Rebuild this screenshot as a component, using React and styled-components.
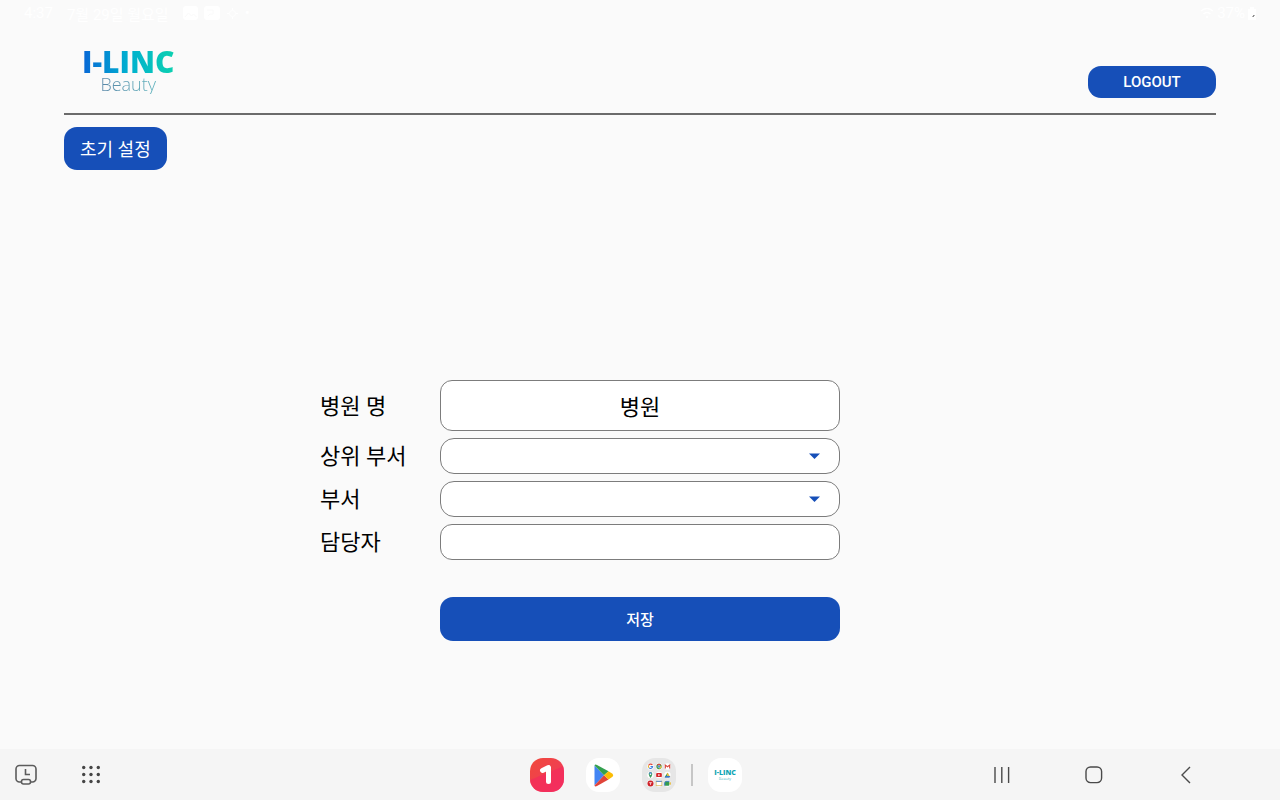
import React, { useState } from "react";
import styled, { createGlobalStyle } from "styled-components";

const primary = "#164fb8";
const border = "#7c7c7c";
const fonts = 'Roboto, "Noto Sans CJK KR", sans-serif';

const GlobalStyle = createGlobalStyle`
  * {
    box-sizing: border-box;
  }
  body {
    margin: 0;
    background-color: #fafafa;
    color: #000;
    font-family: ${fonts};
  }
`;

const Screen = styled.div`
  min-height: 100vh;
  display: flex;
  flex-direction: column;
`;

const StatusBar = styled.div`
  display: flex;
  justify-content: space-between;
  align-items: center;
  height: 26px;
  padding: 0 24px;
  color: #fff;
  font-size: 15px;
`;

const StatusGroup = styled.div`
  display: flex;
  align-items: center;
  gap: ${(props) => props.$gap || 6}px;
`;

const Header = styled.header`
  display: flex;
  justify-content: space-between;
  align-items: flex-end;
  height: 89px;
  margin: 0 5%;
  padding: 0 0 15px 18px;
  border-bottom: 2px solid #6b6b6b;
`;

const Logo = styled.a`
  display: flex;
  flex-direction: column;
  align-items: center;
  padding-bottom: 4px;
  text-decoration: none;
`;

const LogoName = styled.span`
  font-family: "Open Sans", sans-serif;
  font-size: 30px;
  font-weight: 800;
  line-height: 24px;
  color: transparent;
  background-image: linear-gradient(90deg, #0866d6, #00b0d0 50%, #0cd0b0);
  background-clip: text;
`;

const LogoSub = styled.span`
  font-family: "Open Sans", sans-serif;
  font-size: 18px;
  font-weight: 300;
  line-height: 20px;
  color: transparent;
  background-image: linear-gradient(90deg, #5a87a8, #5fb3bd);
  background-clip: text;
`;

const Button = styled.button`
  border: 0;
  border-radius: 13px;
  cursor: pointer;
  color: #fff;
  background-color: ${primary};
  font-family: ${fonts};
  font-size: 15px;
  font-weight: 500;
`;

const LogoutButton = styled(Button)`
  width: 128px;
  height: 32px;
`;

const SetupButton = styled(Button)`
  align-self: flex-start;
  height: 43px;
  margin: 12px 5% 0;
  padding: 0 16px 2px;
  font-size: 18px;
  font-weight: 400;
`;

const SaveButton = styled(Button)`
  grid-column: 2;
  height: 44px;
  margin-top: 30px;
  padding-bottom: 2px;
`;

const Main = styled.main`
  flex: 1;
  display: flex;
  flex-direction: column;
  align-items: center;
  justify-content: flex-end;
  padding: 24px 0 108px;
`;

const Form = styled.form`
  display: grid;
  grid-template-columns: 3fr 10fr 3fr;
  align-items: center;
  row-gap: 7px;
  width: 50%;
`;

const Label = styled.label`
  grid-column: 1;
  padding-top: 2px;
  font-size: 22px;
  line-height: 30px;
  white-space: nowrap;
`;

const Input = styled.input`
  grid-column: 2;
  width: 100%;
  height: ${(props) => (props.$tall ? 51 : 36)}px;
  padding: 0 16px 2px;
  border: 1px solid ${border};
  border-radius: 12px;
  outline: 0;
  background-color: #fff;
  color: #000;
  font-family: ${fonts};
  font-size: 22px;
  text-align: center;
`;

const SelectBox = styled.div`
  grid-column: 2;
  display: grid;
  align-items: center;
  svg {
    grid-area: 1 / 1;
    justify-self: end;
    margin-right: 20px;
    pointer-events: none;
  }
`;

const Select = styled.select`
  grid-area: 1 / 1;
  width: 100%;
  height: 36px;
  padding: 0 40px 0 16px;
  border: 1px solid ${border};
  border-radius: 14px;
  outline: 0;
  appearance: none;
  background-color: #fff;
  color: #000;
  font-family: ${fonts};
  font-size: 22px;
`;

const TaskBar = styled.nav`
  display: grid;
  grid-template-columns: 1fr auto 1fr;
  align-items: center;
  height: 51px;
  padding: 0 22px 0 14px;
  background-color: #f5f5f5;
`;

const TaskGroup = styled.div`
  display: flex;
  align-items: center;
  gap: ${(props) => props.$gap}px;
`;

const NavKeys = styled(TaskGroup)`
  justify-content: flex-end;
  padding-right: 60px;
`;

const IconButton = styled.button`
  display: flex;
  padding: 0;
  border: 0;
  background: none;
  cursor: pointer;
`;

const Divider = styled.span`
  width: 2px;
  height: 22px;
  margin: 0 15px;
  background-color: #c6c6c6;
`;

const AppTile = styled(IconButton)`
  align-items: center;
  justify-content: center;
  width: 34px;
  height: 34px;
  border-radius: 13px;
  overflow: hidden;
  background-color: ${(props) => props.$bg || "#fff"};
`;

const TileLogo = styled.span`
  display: flex;
  flex-direction: column;
  align-items: center;
  font-family: "Open Sans", sans-serif;
  font-size: 7px;
  font-weight: 800;
  line-height: 8px;
  color: #12a5b5;
  small {
    font-size: 4px;
    font-weight: 300;
    line-height: 4px;
  }
`;

const PictureIcon = () => (
  <svg width="15" height="14" viewBox="0 0 15 14">
    <rect width="15" height="14" rx="3" fill="#fff" />
    <path d="M2 11l3.500-4 3 3 2-2 3 3" fill="none" stroke="#fafafa" />
  </svg>
);

const TalkIcon = () => (
  <svg width="16" height="14" viewBox="0 0 16 14">
    <rect width="16" height="14" rx="3" fill="#fff" />
    <path d="M3 4h6v4H6l-2 2" fill="none" stroke="#fafafa" />
  </svg>
);

const GearIcon = () => (
  <svg width="13" height="13" viewBox="0 0 13 13" fill="none" stroke="#fff">
    <circle cx="6.500" cy="6.500" r="3" />
    <path d="M6.500 1v2M6.500 10v2M1 6.500h2M10 6.500h2" />
  </svg>
);

const WifiIcon = () => (
  <svg width="14" height="12" viewBox="0 0 14 12" fill="none" stroke="#fff" strokeWidth="1.500">
    <path d="M1 4q6-5 12 0M3.500 7q3.500-3 7 0M6 10h2" />
  </svg>
);

const BatteryIcon = () => (
  <svg width="8" height="13" viewBox="0 0 8 13">
    <path d="M2 0h4v2h2v11H0V2h2z" fill="#fff" />
    <path d="M4.500 9.500h1v-1h1" fill="none" stroke="#666" />
  </svg>
);

const Caret = () => (
  <svg width="11" height="6" viewBox="0 0 11 6">
    <path d="M0 0.500h11L5.500 6z" fill={primary} />
  </svg>
);

const RecentClockIcon = () => (
  <svg width="24" height="24" viewBox="0 0 24 24" fill="none" stroke="#5c5c5c" strokeWidth="1.600">
    <path d="M7.500 19H5.500a3.500 3.500 0 0 1-3.500-3.500V6A3.500 3.500 0 0 1 5.500 2.500h13A3.500 3.500 0 0 1 22 6v9.500a3.500 3.500 0 0 1-3.500 3.500h-2" />
    <rect x="7.500" y="16.500" width="9" height="4.500" rx="2" />
    <path d="M11.500 6v5.500h4.500" />
  </svg>
);

const AppsIcon = () => (
  <svg width="24" height="24" viewBox="0 0 24 24" fill="#454545">
    {[4.500, 11.500, 18.500].map((y) =>
      [4.700, 12, 19.300].map((x) => <circle key={x + "-" + y} cx={x} cy={y} r="1.700" />)
    )}
  </svg>
);

const OneStoreIcon = () => (
  <svg width="34" height="34" viewBox="0 0 34 34">
    <defs>
      <linearGradient id="one" x1="0" y1="0" x2="1" y2="1">
        <stop offset="0" stopColor="#f0483a" />
        <stop offset="1" stopColor="#f03a62" />
      </linearGradient>
    </defs>
    <rect width="34" height="34" fill="url(#one)" />
    <path d="M0 22L34 8v26H0z" fill="#f5265f" opacity="0.600" />
    <path d="M12.500 12.500l6-3v14" fill="none" stroke="#fff" strokeWidth="5" strokeLinecap="round" strokeLinejoin="round" />
  </svg>
);

const PlayIcon = () => (
  <svg width="34" height="34" viewBox="0 0 34 34">
    <path d="M8.500 7.500v20L18 17.300z" fill="#4285f4" />
    <path d="M8.500 7.500Q9 6 11 7l11.500 6.300L18 17.300z" fill="#34a04f" />
    <path d="M8.500 27.500Q9 29 11 28l11.500-6.500L18 17.300z" fill="#e0443a" />
    <path d="M22.500 13.300l4 2.500q1.500 1.500 0 3l-4 2.700L18 17.300z" fill="#fbbc04" />
  </svg>
);

const FolderIcon = () => (
  <svg width="36" height="36" viewBox="0 0 36 36">
    {[9, 18, 27].map((y) =>
      [9, 18, 27].map((x) => <circle key={x + "-" + y} cx={x} cy={y} r="3.400" fill="#fff" />)
    )}
    <path d="M11 7.500A2.200 2.200 0 0 0 7 8" fill="none" stroke="#e04a3f" strokeWidth="1.200" />
    <path d="M7 8a2.200 2.200 0 0 0 .500 2.500" fill="none" stroke="#e8b62c" strokeWidth="1.200" />
    <path d="M7.500 10.500A2.200 2.200 0 0 0 11.200 9H9" fill="none" stroke="#3f7fe0" strokeWidth="1.200" />
    <circle cx="18" cy="9" r="2.800" fill="#3c9c55" />
    <path d="M15.500 7.700a2.800 2.800 0 0 1 5 0H18z" fill="#d9463c" />
    <path d="M20.600 8a2.800 2.800 0 0 1-2.600 3.800L19.500 9z" fill="#efbd31" />
    <circle cx="18" cy="9" r="1.200" fill="#4078cf" stroke="#fff" strokeWidth="0.400" />
    <path d="M24.700 11V7.500L27 9.300l2.300-1.800V11" fill="none" stroke="#d8473d" strokeWidth="1.200" />
    <path d="M9 21.300c-3-4-2-6.100 0-6.100s3 2.100 0 6.100z" fill="#3b9e60" />
    <path d="M7.300 16q1.700-1.700 3.200 0L9 18z" fill="#4380d7" />
    <circle cx="9" cy="17.200" r="0.800" fill="#fff" />
    <rect x="15" y="16" width="6" height="4.200" rx="1" fill="#d7262b" />
    <path d="M17.300 17v2.200l2-1.100z" fill="#fff" />
    <path d="M27 15.500l-3 4.700h2l2-3.200z" fill="#329b57" />
    <path d="M27 15.500l3 4.700h-2l-2-3.200z" fill="#e9b634" />
    <path d="M25 19h5l-1 1.800h-5z" fill="#3c79c8" />
    <circle cx="9" cy="27" r="3.200" fill="#cf2028" />
    <path d="M7.300 26.200h3.400M9 26v2.600" stroke="#fff" strokeWidth="0.700" />
    <rect x="15" y="24.700" width="6" height="4.600" fill="#fff" stroke="#dcb95a" strokeWidth="0.800" />
    <path d="M15 24.700h6" stroke="#4380d7" />
    <rect x="24" y="24.700" width="5" height="4.600" rx="0.800" fill="#359b50" />
    <path d="M24 29.300v-3l1.500-1.600H29" fill="none" stroke="#4078cf" />
    <path d="M29 26.500l1.500-1.200v3.400L29 27.500z" fill="#e2b42e" />
  </svg>
);

const RecentsIcon = () => (
  <svg width="24" height="24" viewBox="0 0 24 24" stroke="#4a4a4a" strokeWidth="1.400">
    <path d="M5 4v16M11.800 4v16M18.600 4v16" />
  </svg>
);

const HomeIcon = () => (
  <svg width="24" height="24" viewBox="0 0 24 24" fill="none" stroke="#4a4a4a" strokeWidth="1.400">
    <rect x="4" y="4" width="15.600" height="15.600" rx="4.500" />
  </svg>
);

const BackIcon = () => (
  <svg width="24" height="24" viewBox="0 0 24 24" fill="none" stroke="#4a4a4a" strokeWidth="1.400">
    <path d="M16 4l-8 8 8 8" />
  </svg>
);

const Dropdown = ({ id, label }) => {
  return (
    <>
      <Label htmlFor={id}>{label}</Label>
      <SelectBox>
        <Select id={id} defaultValue="">
          <option value=""></option>
        </Select>
        <Caret />
      </SelectBox>
    </>
  );
};

const App = () => {
  const [hospital, setHospital] = useState("병원");
  const [manager, setManager] = useState("");

  return (
    <Screen>
      <GlobalStyle />
      <StatusBar>
        <StatusGroup $gap={14}>
          <span>4:37</span>
          <span>7월 29일 월요일</span>
          <StatusGroup>
            <PictureIcon />
            <TalkIcon />
            <GearIcon />
            <span>•</span>
          </StatusGroup>
        </StatusGroup>
        <StatusGroup $gap={3}>
          <WifiIcon />
          <span>37%</span>
          <BatteryIcon />
        </StatusGroup>
      </StatusBar>

      <Header>
        <Logo href="#">
          <LogoName>I-LINC</LogoName>
          <LogoSub>Beauty</LogoSub>
        </Logo>
        <LogoutButton type="button">LOGOUT</LogoutButton>
      </Header>

      <SetupButton type="button">초기 설정</SetupButton>

      <Main>
        <Form onSubmit={(e) => e.preventDefault()}>
          <Label htmlFor="hospital">병원 명</Label>
          <Input
            id="hospital"
            $tall
            value={hospital}
            onChange={(e) => setHospital(e.target.value)}
          />
          <Dropdown id="parent" label="상위 부서" />
          <Dropdown id="department" label="부서" />
          <Label htmlFor="manager">담당자</Label>
          <Input
            id="manager"
            value={manager}
            onChange={(e) => setManager(e.target.value)}
          />
          <SaveButton type="submit">저장</SaveButton>
        </Form>
      </Main>

      <TaskBar>
        <TaskGroup $gap={41}>
          <IconButton aria-label="Recent"><RecentClockIcon /></IconButton>
          <IconButton aria-label="Apps"><AppsIcon /></IconButton>
        </TaskGroup>
        <TaskGroup $gap={0}>
          <TaskGroup $gap={22}>
            <AppTile aria-label="One Store"><OneStoreIcon /></AppTile>
            <AppTile aria-label="Play Store"><PlayIcon /></AppTile>
            <AppTile aria-label="Google" $bg="#e6e6e6"><FolderIcon /></AppTile>
          </TaskGroup>
          <Divider />
          <AppTile aria-label="I-LINC Beauty">
            <TileLogo>
              I-LINC
              <small>Beauty</small>
            </TileLogo>
          </AppTile>
        </TaskGroup>
        <NavKeys $gap={68}>
          <IconButton aria-label="Recents"><RecentsIcon /></IconButton>
          <IconButton aria-label="Home"><HomeIcon /></IconButton>
          <IconButton aria-label="Back"><BackIcon /></IconButton>
        </NavKeys>
      </TaskBar>
    </Screen>
  );
};

export default App;
